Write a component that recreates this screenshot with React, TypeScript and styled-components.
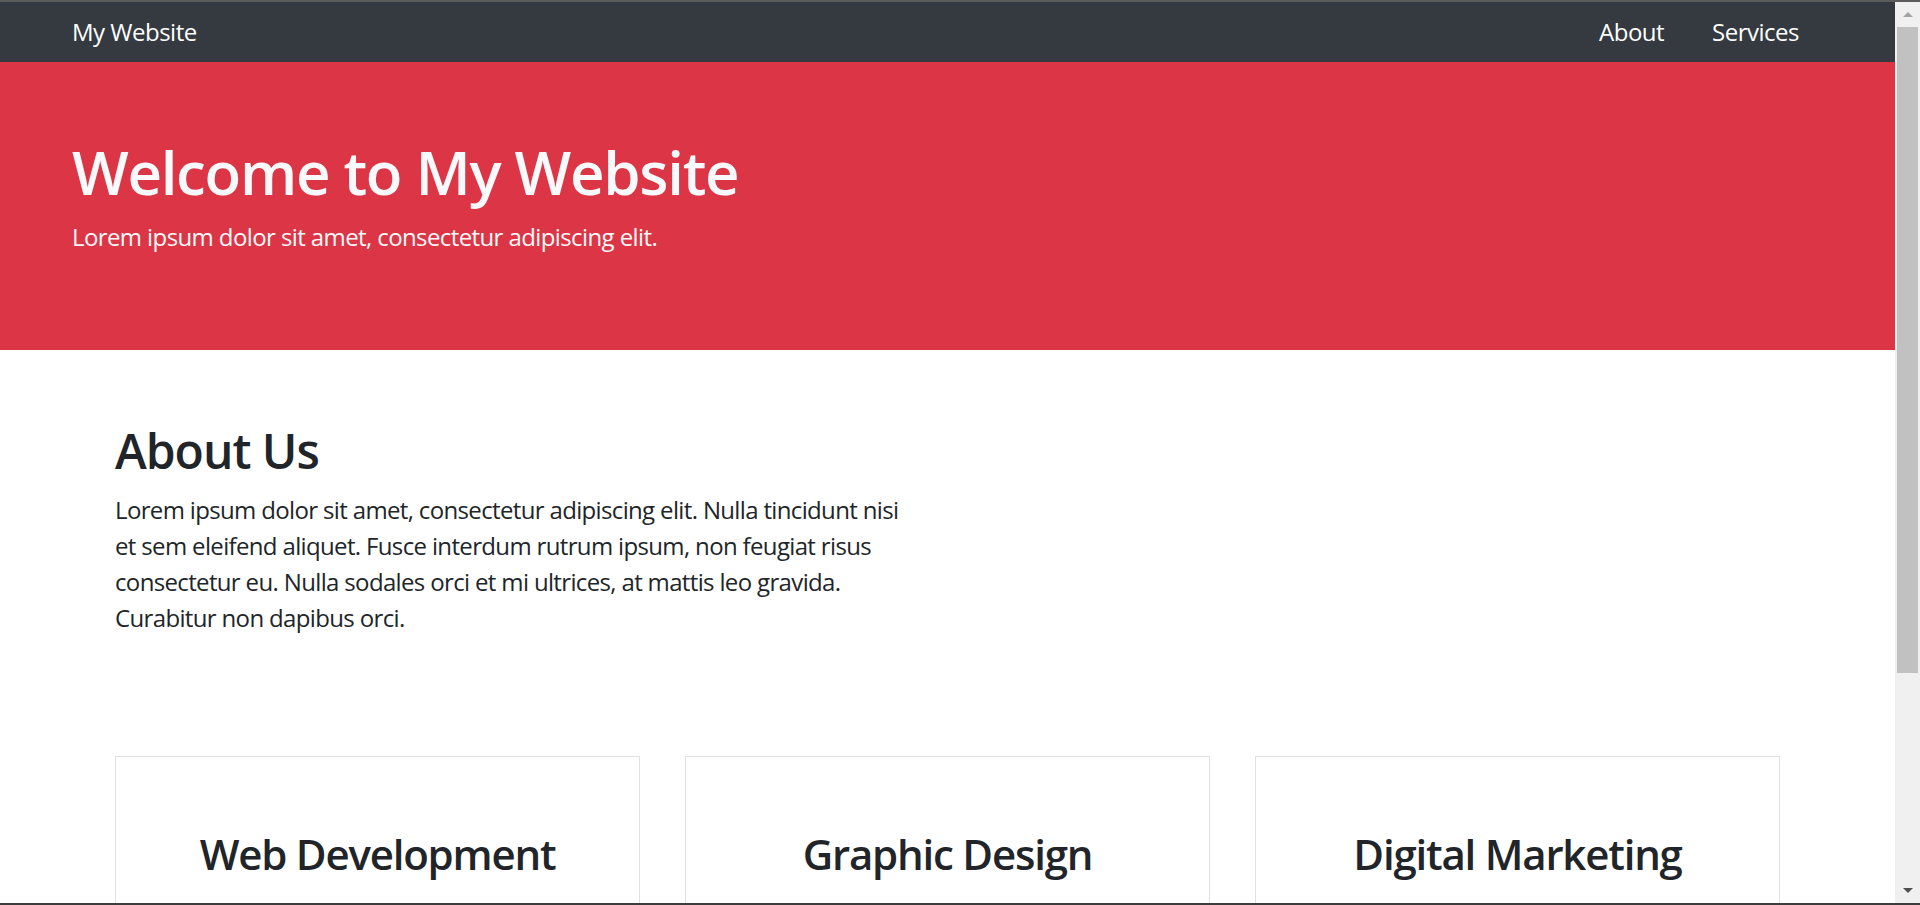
import React from "react";
import styled, { createGlobalStyle } from "styled-components";

const GlobalStyle = createGlobalStyle`
  html, body {
    margin: 0;
    padding: 0;
    height: 905px;
    overflow: hidden;
    background: #ffffff;
  }
  * { box-sizing: border-box; }
  body {
    font-family: "Open Sans", "Noto Sans", sans-serif;
    color: #212529;
  }
`;

const Frame = styled.div`
  display: flex;
  flex-direction: column;
  width: 1920px;
  height: 905px;
`;

const FrameEdge = styled.div<{ $h: number; $c: string }>`
  flex: 0 0 ${(p) => p.$h}px;
  background: ${(p) => p.$c};
`;

const Middle = styled.div`
  flex: 1 1 auto;
  display: flex;
  min-height: 0;
`;

const Page = styled.div`
  flex: 1 1 auto;
  overflow: hidden;
  min-width: 0;
`;

const ScrollBar = styled.div`
  flex: 0 0 25px;
  display: flex;
  flex-direction: column;
  background: #f0f0f0;
`;

const ScrollButton = styled.div`
  flex: 0 0 25px;
  display: flex;
  align-items: center;
  justify-content: center;
`;

const Arrow = styled.div<{ $down?: boolean; $c: string }>`
  width: 0;
  height: 0;
  border-left: 5px solid transparent;
  border-right: 5px solid transparent;
  ${(p) =>
    p.$down
      ? `border-top: 5px solid ${p.$c};`
      : `border-bottom: 5px solid ${p.$c};`}
`;

const Track = styled.div`
  flex: 1 1 auto;
  display: flex;
  flex-direction: column;
  padding: 0 2px;
`;

const Thumb = styled.div`
  flex: 0 0 646px;
  background: #c1c1c1;
`;

const Navbar = styled.nav`
  height: 60px;
  background: #343a40;
  display: flex;
  align-items: center;
  justify-content: space-between;
  padding: 0 72px;
`;

const Brand = styled.a`
  color: #ffffff;
  font-size: 24px;
  line-height: 36px;
  letter-spacing: -0.5px;
  text-decoration: none;
`;

const NavList = styled.ul`
  display: flex;
  list-style: none;
  margin: 0;
  padding: 0;
`;

const NavLink = styled.a`
  display: block;
  color: #ffffff;
  font-size: 24px;
  line-height: 36px;
  letter-spacing: -0.5px;
  padding: 0 24px;
  text-decoration: none;
`;

const Hero = styled.header`
  background: #dc3545;
  color: #f8f9fa;
  padding: 74px 72px 0;
  height: 288px;
`;

const HeroTitle = styled.h1`
  margin: 0 0 11px;
  font-size: 60px;
  line-height: 72px;
  font-weight: 600;
  letter-spacing: -1.3px;
`;

const Lead = styled.p`
  margin: 0;
  font-size: 24px;
  line-height: 36px;
  letter-spacing: -0.6px;
`;

const Container = styled.section`
  width: 1665px;
  margin: 0 auto;
`;

const About = styled.div`
  padding-top: 72px;
  width: 795px;
`;

const SectionTitle = styled.h2`
  margin: 0 0 12px;
  font-size: 48px;
  line-height: 57.6px;
  font-weight: 600;
  letter-spacing: -1px;
`;

const Body = styled.p`
  margin: 0;
  font-size: 24px;
  line-height: 36px;
  letter-spacing: -0.65px;
`;

const Cards = styled.div`
  display: grid;
  grid-template-columns: repeat(3, 1fr);
  gap: 45px;
  margin-top: 120px;
`;

const Card = styled.div`
  border: 1px solid #dee2e6;
  padding: 72px;
  text-align: center;
`;

const CardTitle = styled.h3`
  margin: 0 0 18px;
  font-size: 42px;
  line-height: 50.4px;
  font-weight: 600;
  letter-spacing: -1.2px;
`;

const CardText = styled.p`
  margin: 0;
  font-size: 24px;
  line-height: 36px;
  letter-spacing: -0.6px;
`;

const services = [
  { title: "Web Development", text: "We provide professional web development services." },
  { title: "Graphic Design", text: "Stunning graphic designs for your brand." },
  { title: "Digital Marketing", text: "We help businesses grow with digital marketing." },
];

export default function App() {
  return (
    <>
      <GlobalStyle />
      <Frame>
        <FrameEdge $h={2} $c="#5b5b5b" />
        <Middle>
          <Page>
            <Navbar>
              <Brand href="#">My Website</Brand>
              <NavList>
                <li><NavLink href="#">About</NavLink></li>
                <li><NavLink href="#">Services</NavLink></li>
              </NavList>
            </Navbar>
            <Hero>
              <HeroTitle>Welcome to My Website</HeroTitle>
              <Lead>Lorem ipsum dolor sit amet, consectetur adipiscing elit.</Lead>
            </Hero>
            <Container>
              <About>
                <SectionTitle>About Us</SectionTitle>
                <Body>
                  Lorem ipsum dolor sit amet, consectetur adipiscing elit. Nulla tincidunt nisi et sem
                  eleifend aliquet. Fusce interdum rutrum ipsum, non feugiat risus consectetur eu. Nulla
                  sodales orci et mi ultrices, at mattis leo gravida. Curabitur non dapibus orci.
                </Body>
              </About>
              <Cards>
                {services.map((s) => (
                  <Card key={s.title}>
                    <CardTitle>{s.title}</CardTitle>
                    <CardText>{s.text}</CardText>
                  </Card>
                ))}
              </Cards>
            </Container>
          </Page>
          <ScrollBar>
            <ScrollButton><Arrow $c="#a3a3a3" /></ScrollButton>
            <Track><Thumb /></Track>
            <ScrollButton><Arrow $down $c="#505050" /></ScrollButton>
          </ScrollBar>
        </Middle>
        <FrameEdge $h={2} $c="#3c3c3c" />
      </Frame>
    </>
  );
}
